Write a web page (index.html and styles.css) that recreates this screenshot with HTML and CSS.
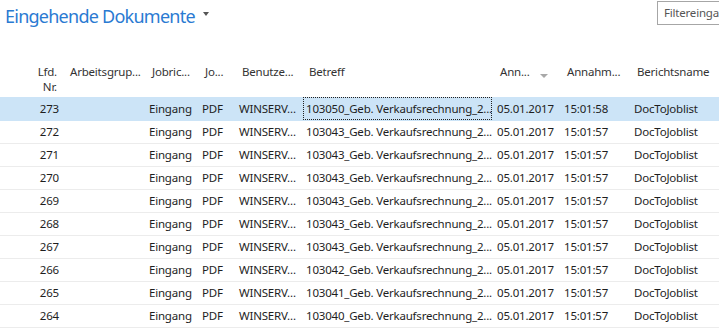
FILE: index.html
```html
<!DOCTYPE html>
<html lang="de">
<head>
<meta charset="utf-8">
<link rel="stylesheet" href="styles.css">
</head>
<body>
<div class="page">
  <div class="topbar">
    <div class="title">Eingehende Dokumente <span class="caret"></span></div>
    <div class="filter">Filtereingabe</div>
  </div>
  <table class="grid">
    <colgroup>
      <col class="c1"><col class="c2"><col class="c3"><col class="c4"><col class="c5"><col class="c6"><col class="c7"><col class="c8"><col class="c9">
    </colgroup>
    <thead>
      <tr>
        <th class="num">Lfd.<br>Nr.</th>
        <th>Arbeitsgrup...</th>
        <th>Jobric...</th>
        <th>Jo...</th>
        <th>Benutze...</th>
        <th>Betreff</th>
        <th class="sorted">Ann... <span class="sort"></span></th>
        <th>Annahm...</th>
        <th>Berichtsname</th>
      </tr>
    </thead>
    <tbody>
      <tr class="sel"><td class="num">273</td><td></td><td>Eingang</td><td>PDF</td><td>WINSERV...</td><td class="focus"><span>103050_Geb. Verkaufsrechnung_2...</span></td><td>05.01.2017</td><td>15:01:58</td><td>DocToJoblist</td></tr>
      <tr><td class="num">272</td><td></td><td>Eingang</td><td>PDF</td><td>WINSERV...</td><td>103043_Geb. Verkaufsrechnung_2...</td><td>05.01.2017</td><td>15:01:57</td><td>DocToJoblist</td></tr>
      <tr><td class="num">271</td><td></td><td>Eingang</td><td>PDF</td><td>WINSERV...</td><td>103043_Geb. Verkaufsrechnung_2...</td><td>05.01.2017</td><td>15:01:57</td><td>DocToJoblist</td></tr>
      <tr><td class="num">270</td><td></td><td>Eingang</td><td>PDF</td><td>WINSERV...</td><td>103043_Geb. Verkaufsrechnung_2...</td><td>05.01.2017</td><td>15:01:57</td><td>DocToJoblist</td></tr>
      <tr><td class="num">269</td><td></td><td>Eingang</td><td>PDF</td><td>WINSERV...</td><td>103043_Geb. Verkaufsrechnung_2...</td><td>05.01.2017</td><td>15:01:57</td><td>DocToJoblist</td></tr>
      <tr><td class="num">268</td><td></td><td>Eingang</td><td>PDF</td><td>WINSERV...</td><td>103043_Geb. Verkaufsrechnung_2...</td><td>05.01.2017</td><td>15:01:57</td><td>DocToJoblist</td></tr>
      <tr><td class="num">267</td><td></td><td>Eingang</td><td>PDF</td><td>WINSERV...</td><td>103043_Geb. Verkaufsrechnung_2...</td><td>05.01.2017</td><td>15:01:57</td><td>DocToJoblist</td></tr>
      <tr><td class="num">266</td><td></td><td>Eingang</td><td>PDF</td><td>WINSERV...</td><td>103042_Geb. Verkaufsrechnung_2...</td><td>05.01.2017</td><td>15:01:57</td><td>DocToJoblist</td></tr>
      <tr><td class="num">265</td><td></td><td>Eingang</td><td>PDF</td><td>WINSERV...</td><td>103041_Geb. Verkaufsrechnung_2...</td><td>05.01.2017</td><td>15:01:57</td><td>DocToJoblist</td></tr>
      <tr><td class="num">264</td><td></td><td>Eingang</td><td>PDF</td><td>WINSERV...</td><td>103040_Geb. Verkaufsrechnung_2...</td><td>05.01.2017</td><td>15:01:57</td><td>DocToJoblist</td></tr>
    </tbody>
  </table>
</div>
</body>
</html>
```

FILE: styles.css
```css
html, body {
  margin: 0;
  padding: 0;
  background: #ffffff;
}
body {
  font-family: "Noto Sans", "Open Sans", sans-serif;
  color: #262626;
  width: 719px;
  height: 330px;
  overflow: hidden;
}
.page {
  display: flex;
  flex-direction: column;
}
.topbar {
  display: flex;
  justify-content: space-between;
  align-items: flex-start;
  height: 60px;
}
.title {
  margin: 3px 0 0 5px;
  font-size: 18px;
  line-height: 26px;
  letter-spacing: -0.75px;
  color: #2a7ad2;
  display: flex;
  align-items: center;
}
.caret {
  display: inline-block;
  margin-left: 8px;
  margin-top: -4px;
  width: 0;
  height: 0;
  border-left: 3.5px solid transparent;
  border-right: 3.5px solid transparent;
  border-top: 4px solid #555;
}
.filter {
  margin-top: 1px;
  width: 55px;
  height: 22px;
  border: 1px solid #a6a6a6;
  border-right: none;
  padding-left: 6px;
  font-size: 11.5px;
  letter-spacing: -0.2px;
  line-height: 22px;
  color: #555;
  white-space: nowrap;
  overflow: hidden;
}
.grid {
  border-collapse: collapse;
  table-layout: fixed;
  width: 719px;
  font-size: 11.5px;
  letter-spacing: -0.2px;
}
.c1 { width: 64px; }
.c2 { width: 82px; }
.c3 { width: 53px; }
.c4 { width: 37px; }
.c5 { width: 67px; }
.c6 { width: 191px; }
.c7 { width: 67px; }
.c8 { width: 70px; }
.c9 { width: 88px; }
th {
  font-weight: normal;
  color: #333;
  text-align: left;
  vertical-align: top;
  padding: 4px 0 0 6px;
  height: 33px;
  line-height: 15px;
  white-space: nowrap;
  overflow: hidden;
}
th.num {
  text-align: right;
  padding: 4px 7px 0 0;
}
.sorted {
  position: relative;
}
.sort {
  position: absolute;
  left: 46px;
  top: 14px;
  width: 0;
  height: 0;
  border-left: 4.5px solid transparent;
  border-right: 4.5px solid transparent;
  border-top: 4px solid #a8a8a8;
}
td {
  height: 22px;
  padding: 0 0 0 3px;
  line-height: 22px;
  border-bottom: 1px solid #ececec;
  white-space: nowrap;
  overflow: hidden;
  color: #1e1e1e;
}
td.num {
  text-align: right;
  padding: 0 5px 0 0;
}
tr.sel td {
  background: #cce4f7;
  border-bottom-color: #cce4f7;
}
td.focus {
  padding: 0;
}
td.focus span {
  display: block;
  height: 21px;
  line-height: 21px;
  border: 1px dotted #222;
  padding-left: 2px;
  margin-right: 2px;
}
```
